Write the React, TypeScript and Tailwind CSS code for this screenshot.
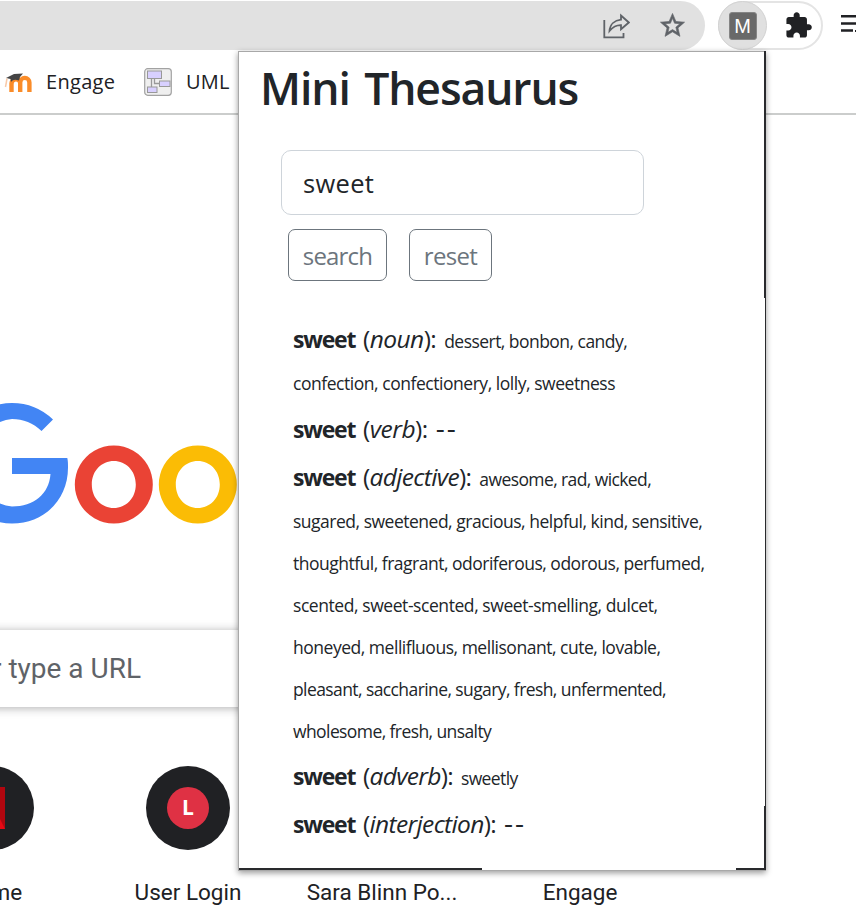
import type { ReactNode } from "react";

type Line = { text: string; tracking: string };
type Entry = { part: string; tracking: string; spacing: string; lines: Line[] };

const entries: Entry[] = [
  {
    part: "noun",
    tracking: "tracking-[-0.55px]",
    spacing: "mb-[6px]",
    lines: [
      { text: "dessert, bonbon, candy,", tracking: "tracking-[-0.54px]" },
      { text: "confection, confectionery, lolly, sweetness", tracking: "tracking-[-0.46px]" },
    ],
  },
  { part: "verb", tracking: "tracking-[-0.5px]", spacing: "mb-[6px]", lines: [] },
  {
    part: "adjective",
    tracking: "tracking-[-0.65px]",
    spacing: "mb-[5px]",
    lines: [
      { text: "awesome, rad, wicked,", tracking: "tracking-[-0.6px]" },
      { text: "sugared, sweetened, gracious, helpful, kind, sensitive,", tracking: "tracking-[-0.49px]" },
      { text: "thoughtful, fragrant, odoriferous, odorous, perfumed,", tracking: "tracking-[-0.5px]" },
      { text: "scented, sweet-scented, sweet-smelling, dulcet,", tracking: "tracking-[-0.43px]" },
      { text: "honeyed, mellifluous, mellisonant, cute, lovable,", tracking: "tracking-[-0.48px]" },
      { text: "pleasant, saccharine, sugary, fresh, unfermented,", tracking: "tracking-[-0.59px]" },
      { text: "wholesome, fresh, unsalty", tracking: "tracking-[-0.59px]" },
    ],
  },
  {
    part: "adverb",
    tracking: "tracking-[-0.7px]",
    spacing: "mb-[6px]",
    lines: [{ text: "sweetly", tracking: "tracking-[-0.6px]" }],
  },
  { part: "interjection", tracking: "tracking-[-0.65px]", spacing: "mb-0", lines: [] },
];

function Definition({ entry }: { entry: Entry }) {
  const [first, ...rest] = entry.lines;
  return (
    <div className={`leading-[42px] whitespace-nowrap ${entry.spacing}`}>
      <div className="flex h-[42px] items-baseline text-[24px]">
        <b className="w-[70px] text-[23px] tracking-[-1.2px]">sweet</b>
        <span className={`text-[24.5px] ${entry.tracking}`}>
          (<i>{entry.part}</i>):
        </span>
        {first ? (
          <span className={`ml-[8px] text-[17.5px] ${first.tracking}`}>{first.text}</span>
        ) : (
          <span className="ml-[8px] text-[28px] leading-[1px] tracking-[2px]">--</span>
        )}
      </div>
      {rest.map((l) => (
        <div key={l.text} className={`h-[42px] pt-[2px] text-[17.5px] ${l.tracking}`}>
          {l.text}
        </div>
      ))}
    </div>
  );
}

function Toolbar() {
  return (
    <div className="flex h-[51px] items-start pt-px">
      <div className="flex h-[49px] w-[705px] shrink-0 items-center justify-end rounded-r-full bg-[#e1e1e1] pr-[18px]">
        <svg className="mr-[28px]" width="28" height="28" viewBox="0 0 28 28" fill="none" stroke="#5f6368" strokeWidth="1.8">
          <path d="M2.300 8V25.400H21.500V21" />
          <path d="M19 3.500 26.800 10.500 19 17.300V13.200C13.500 13 10.500 15.500 7.500 19C8 12.500 12.500 8.200 19 7.600Z" />
        </svg>
        <svg width="29" height="29" viewBox="0 0 24 24" fill="#5f6368">
          <path d="M22 9.24l-7.19-.62L12 2 9.19 8.63 2 9.24l5.46 4.73L5.82 21 12 17.27 18.18 21l-1.63-7.03L22 9.24zM12 15.4l-3.76 2.27 1-4.28-3.32-2.88 4.38-.38L12 6.1l1.71 4.04 4.38.38-3.32 2.88 1 4.28L12 15.4z" stroke="#5f6368" strokeWidth=".5" />
        </svg>
      </div>
      <div className="ml-[13px] flex h-[49px] w-[105px] shrink-0 items-center rounded-full border-2 border-[#e4e4e4]">
        <div className="-ml-[2px] flex size-[49px] shrink-0 items-center justify-center rounded-full border border-[#d2d2d2] bg-[#e0e0e0]">
          <div className="flex size-[28px] items-center justify-center rounded-[3px] border border-[#858585] bg-[#696969] font-['Liberation_Sans',sans-serif] text-[20px] leading-none text-white">
            M
          </div>
        </div>
        <svg className="ml-[17px] shrink-0" width="29" height="29" viewBox="0 0 24 24" fill="#202124">
          <path d="M20.5 11H19V7c0-1.100-.9-2-2-2h-4V3.500C13 2.120 11.880 1 10.500 1S8 2.120 8 3.500V5H4c-1.100 0-1.990.9-1.990 2v3.800H3.500c1.490 0 2.700 1.210 2.700 2.700s-1.210 2.700-2.700 2.700H2V20c0 1.100.9 2 2 2h3.800v-1.500c0-1.490 1.210-2.700 2.700-2.700s2.700 1.210 2.700 2.700V22H17c1.100 0 2-.9 2-2v-4h1.500c1.380 0 2.500-1.120 2.500-2.500S21.880 11 20.500 11z" />
        </svg>
      </div>
      <svg className="mt-[11px] ml-[18px] shrink-0" width="15" height="24" viewBox="0 0 15 24" fill="#202124">
        <path d="M0 3h15v2.500H0zM0 10.300h15v2.500H0zM0 17.300h12v2.500H0zM14 18h1v2h-1z" />
      </svg>
    </div>
  );
}

function Bookmarks() {
  return (
    <div className="flex h-[64px] items-center border-b-2 border-[#cbcdcc] font-['Open_Sans',sans-serif] text-[20px] text-[#202124]">
      <svg className="ml-[3px] shrink-0" width="30" height="24" viewBox="0 0 30 24">
        <path d="M8.500 22V13.500a4.500 4.500 0 0 1 8.700-1.300V22M17.200 22V12.500a4.600 4.600 0 0 1 9.200 0V22" fill="none" stroke="#f98012" strokeOpacity=".9" strokeWidth="4.400" />
        <path d="M3 8 11 4 20 3.500 17 7 16 10.500C12 9 10 9.500 8 12L7.500 9Z" fill="#444" />
        <path d="M4 8.500 2.500 17" stroke="#f8c9a8" strokeWidth="1.500" />
      </svg>
      <span className="ml-[13px] w-[98px] tracking-[0.3px]">Engage</span>
      <svg className="shrink-0" width="28" height="28" viewBox="0 0 28 28">
        <rect x=".7" y=".7" width="26.600" height="26.600" rx="3" fill="#efefef" stroke="#a2a2a2" strokeWidth="1.200" />
        <path d="M7.500 10v9M10.500 10v5.500h5" fill="none" stroke="#999" strokeWidth="1.300" />
        <g fill="#d8d0ff" stroke="#999" strokeWidth="1">
          <rect x="3.500" y="3" width="14" height="7.500" />
          <rect x="15.500" y="13" width="10.500" height="5.500" />
          <rect x="3.500" y="19" width="9.500" height="5.500" />
        </g>
      </svg>
      <span className="ml-[14px] tracking-[0.2px]">UML</span>
    </div>
  );
}

function GoogleMark() {
  return (
    <svg className="block" width="260" height="124" viewBox="0 0 260 124">
      <path d="M53 27.500A59.500 59.500 0 0 0 12 11A60.200 60.200 0 0 0 12 131.500C44 131.500 68 108 68 75.500C68 71.500 68 69 67.300 66H12V82H50.500C49 102 34 114.500 12 114.500A44 44 0 0 1 12 27C23 27 33.500 31 41.500 39Z" transform="translate(0 -10)" fill="#4285f4" transform-origin="0 0" />
      <path fillRule="evenodd" d="M113.800 43.500a39 39 0 1 0 .01 0ZM113.800 59c12 0 22 9.500 22 23.500s-10 23.500-22 23.500-22-9.500-22-23.500 10-23.500 22-23.500Z" fill="#ea4335" />
      <path fillRule="evenodd" d="M197.800 43.500a39 39 0 1 0 .01 0ZM197.800 59c12 0 22 9.500 22 23.500s-10 23.500-22 23.500-22-9.500-22-23.500 10-23.500 22-23.500Z" fill="#fbbc05" />
    </svg>
  );
}

function Shortcut({ label, className, children }: { label: string; className: string; children?: ReactNode }) {
  return (
    <div className={`flex shrink-0 flex-col items-center ${className}`}>
      <div className="flex size-[84px] items-center justify-center rounded-full bg-[#202124]">{children}</div>
      <span className="mt-[28px] text-[22.5px] leading-[28px] whitespace-nowrap">{label}</span>
    </div>
  );
}

function Popup() {
  return (
    <section className="absolute top-[51px] left-[238px] h-[820px] w-[528px] border border-[#a8a8a8] border-r-0 bg-white font-['Open_Sans',sans-serif] text-[#212529] shadow-[0_2px_6px_rgba(0,0,0,0.4)]">
      <h1 className="ml-[21px] h-[98px] pt-[6px] text-[44.5px] leading-[60px] font-semibold tracking-[-1.1px] whitespace-nowrap [word-spacing:4px]">
        Mini Thesaurus
      </h1>
      <div className="ml-[42px] flex h-[65px] w-[363px] items-center rounded-[10px] border border-[#ced4da] pt-[2px] pl-[21px] text-[25.500px] tracking-[0.3px]">
        sweet
      </div>
      <div className="mt-[14px] ml-[49px] flex gap-[22px] text-[24px] text-[#6c757d]">
        <button className="h-[52px] w-[99px] rounded-[7px] border border-[#6c757d] pt-[2px] tracking-[-0.8px]">search</button>
        <button className="h-[52px] w-[83px] rounded-[7px] border border-[#6c757d] pt-[2px] tracking-[-0.7px]">reset</button>
      </div>
      <div className="mt-[37px] ml-[54px]">
        {entries.map((e) => (
          <Definition key={e.part} entry={e} />
        ))}
      </div>
      <div className="absolute -top-px right-0 h-[247px] w-[2px] bg-[#292a2d]" />
      <div className="absolute top-0 right-0 h-[818px] w-px bg-[#292a2d]" />
      <div className="absolute right-0 bottom-0 h-[64px] w-[2px] bg-[#292a2d]" />
      <div className="absolute right-0 bottom-0 h-[2px] w-[30px] bg-[#292a2d]" />
      <div className="absolute bottom-0 left-0 h-[2px] w-[243px] bg-[#292a2d]" />
    </section>
  );
}

export default function App() {
  return (
    <main className="relative h-[905px] w-[856px] overflow-hidden bg-white font-['Roboto',sans-serif] text-[#202124]">
      <Toolbar />
      <Bookmarks />
      <div className="h-[515px] pt-[287px]">
        <GoogleMark />
      </div>
      <div className="-ml-[20px] flex h-[77px] w-[420px] items-center bg-white pl-[12px] text-[28px] text-[#5f6368] shadow-[0_1px_9px_rgba(32,33,36,0.36)]">
        <span className="whitespace-pre">r type a URL</span>
      </div>
      <div className="mt-[59px] flex">
        <Shortcut label="Home" className="-ml-[90px] w-[164px]">
          <svg className="-ml-[8px]" width="42" height="42" viewBox="0 0 42 42">
            <path d="M27 0H38V42H27Z" fill="#b1060f" />
            <path d="M5 0H17L38 42H26Z" fill="#e50914" />
          </svg>
        </Shortcut>
        <Shortcut label="User Login" className="ml-[32px] w-[164px]">
          <span className="flex size-[42px] items-center justify-center rounded-full bg-[#df3144] font-['Open_Sans',sans-serif] text-[21px] font-bold text-white">L</span>
        </Shortcut>
        <Shortcut label="Sara Blinn Po..." className="ml-[30px] w-[164px]" />
        <Shortcut label="Engage" className="ml-[34px] w-[164px]" />
      </div>
      <Popup />
    </main>
  );
}
